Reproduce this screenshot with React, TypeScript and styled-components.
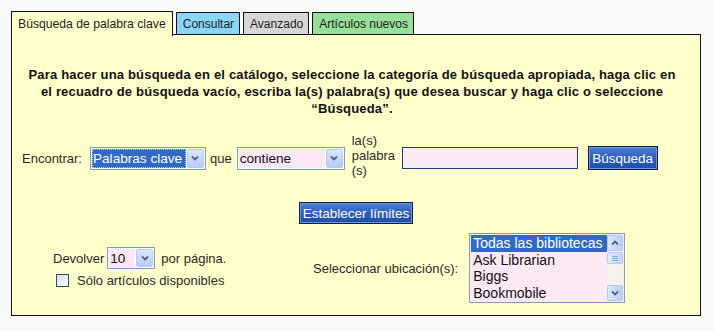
import React from "react";
import styled, { createGlobalStyle } from "styled-components";

const Global = createGlobalStyle`
  html, body { margin: 0; padding: 0; background: #f9fbf8; }
  body { font-family: "Liberation Sans", Arial, sans-serif; font-size: 13px; color: #2a2a2a; }
`;

const Page = styled.div`
  padding: 11px 13px 0 11px;
  width: 690px;
`;

const TabRow = styled.div`
  display: flex;
  align-items: flex-end;
  gap: 3px;
  height: 24px;
  position: relative;
  z-index: 2;
`;

const Tab = styled.div<{ $bg: string; $active?: boolean }>`
  box-sizing: border-box;
  height: ${(p) => (p.$active ? "25px" : "23px")};
  margin-bottom: ${(p) => (p.$active ? "-1px" : "0")};
  padding: 0 ${(p) => (p.$active ? "6px" : "5px")} 0 6px;
  display: flex;
  align-items: center;
  padding-top: ${(p) => (p.$active ? "0" : "1px")};
  background: ${(p) => p.$bg};
  border: 1px solid #111;
  border-bottom: ${(p) => (p.$active ? "none" : "1px solid #111")};
  font-size: ${(p) => (p.$active ? "12.2px" : "12px")};
  color: #1e1e1e;
  white-space: nowrap;
`;

const Panel = styled.div`
  box-sizing: border-box;
  width: 690px;
  height: 282px;
  margin-top: -1px;
  border: 1px solid #111;
  background: #ffffcc;
  position: relative;
  z-index: 1;
  display: flex;
  flex-direction: column;
`;

const Intro = styled.p`
  margin: 31px 0 0;
  text-align: center;
  font-weight: bold;
  font-size: 13px;
  letter-spacing: 0.18px;
  line-height: 17px;
  color: #111;
  padding: 0 21px 0 13px;
`;

const SearchRow = styled.div`
  display: flex;
  align-items: center;
  margin-top: 22px;
  padding-left: 10px;
  height: 38px;
`;

const Label = styled.span<{ $ml?: number }>`
  font-size: 13px;
  color: #2a2a2a;
  margin-left: ${(p) => p.$ml ?? 0}px;
  white-space: nowrap;
`;

const StackLabel = styled.span`
  font-size: 13px;
  line-height: 15px;
  color: #2a2a2a;
  width: 46px;
  margin-left: 7px;
  align-self: flex-start;
  margin-top: -6px;
`;

const SelectBox = styled.div<{ $w: number; $h?: number; $ml?: number }>`
  box-sizing: border-box;
  width: ${(p) => p.$w}px;
  height: ${(p) => p.$h ?? 23}px;
  margin-left: ${(p) => p.$ml ?? 0}px;
  border: 1px solid #7f9db9;
  background: #fff;
  display: flex;
  align-items: stretch;
  padding: 1px;
`;

const SelectValue = styled.div<{ $selected?: boolean }>`
  flex: 1;
  display: flex;
  align-items: center;
  padding-left: 1px;
  font-size: 13.6px;
  background: ${(p) => (p.$selected ? "#316ac5" : "#fbe8f2")};
  color: ${(p) => (p.$selected ? "#fff" : "#111")};
  outline: ${(p) => (p.$selected ? "1px dotted #b9c9ea" : "none")};
  outline-offset: -1px;
  white-space: nowrap;
  overflow: hidden;
`;

const ArrowBtn = styled.div`
  box-sizing: border-box;
  width: 17px;
  flex: none;
  margin-left: 1px;
  border: 1px solid #b5c8f5;
  border-radius: 2px;
  background: linear-gradient(#dce7fd, #b5cbf7);
  display: flex;
  align-items: center;
  justify-content: center;
`;

const Chevron = ({ up }: { up?: boolean }) => (
  <svg width="8" height="6" viewBox="0 0 8 6">
    <path
      d={up ? "M1 4.5 L4 1.5 L7 4.5" : "M1 1.5 L4 4.5 L7 1.5"}
      stroke="#4d6185"
      strokeWidth="1.8"
      fill="none"
    />
  </svg>
);

const TextInput = styled.div`
  box-sizing: border-box;
  width: 176px;
  height: 22px;
  margin-left: 4px;
  border: 1px solid #1c3f74;
  background: #fbe9f3;
`;

const BlueButton = styled.button<{ $w: number; $h: number; $ml?: number }>`
  box-sizing: border-box;
  width: ${(p) => p.$w}px;
  height: ${(p) => p.$h}px;
  margin-left: ${(p) => p.$ml ?? 0}px;
  border: 1px solid #0b1f4a;
  box-shadow: inset 0 0 0 1px #6f95d8;
  background: linear-gradient(#4a7fd6, #2a5cb8 55%, #1f4ea6);
  color: #fff;
  font-family: "Liberation Sans", Arial, sans-serif;
  font-size: 13.5px;
  padding: 0;
  cursor: pointer;
`;

const Center = styled.div`
  display: flex;
  justify-content: center;
  margin-top: 25px;
`;

const Bottom = styled.div`
  display: grid;
  grid-template-columns: 260px 1fr;
  margin-top: 9px;
`;

const LeftCol = styled.div`
  padding-left: 41px;
  padding-top: 14px;
  display: flex;
  flex-direction: column;
  gap: 4px;
`;

const InlineRow = styled.div`
  display: flex;
  align-items: center;
`;

const CheckRow = styled.label`
  display: flex;
  align-items: center;
  gap: 8px;
  margin-left: 3px;
  font-size: 13px;
  color: #2a2a2a;
`;

const Check = styled.span`
  box-sizing: border-box;
  width: 13px;
  height: 13px;
  border: 1px solid #1c5180;
  background: linear-gradient(135deg, #dcdcd6, #fff);
`;

const RightCol = styled.div`
  display: flex;
  align-items: center;
  padding-left: 41px;
  gap: 11px;
`;

const ListBox = styled.div`
  box-sizing: border-box;
  width: 156px;
  height: 70px;
  border: 1px solid #7f9db9;
  background: #fbe9f3;
  display: flex;
  padding: 1px;
`;

const Items = styled.div`
  flex: 1;
  overflow: hidden;
`;

const Item = styled.div<{ $selected?: boolean }>`
  height: 16.5px;
  line-height: 16px;
  font-size: 14px;
  padding-left: 2px;
  white-space: nowrap;
  background: ${(p) => (p.$selected ? "#316ac5" : "transparent")};
  color: ${(p) => (p.$selected ? "#fff" : "#111")};
`;

const ScrollBar = styled.div`
  width: 16px;
  flex: none;
  display: flex;
  flex-direction: column;
  background: #f4f3ee;
`;

const ScrollBtn = styled.div`
  box-sizing: border-box;
  height: 16px;
  border: 1px solid #b5c8f5;
  border-radius: 2px;
  background: linear-gradient(90deg, #dce7fd, #b9cdf7);
  display: flex;
  align-items: center;
  justify-content: center;
`;

const Thumb = styled.div`
  box-sizing: border-box;
  height: 12px;
  margin-top: 1px;
  border: 1px solid #b5c8f5;
  border-radius: 2px;
  background: linear-gradient(90deg, #e4ecfd, #c2d4f8);
  display: flex;
  flex-direction: column;
  align-items: center;
  justify-content: center;
  gap: 1px;
`;

const Grip = styled.span`
  width: 6px;
  height: 1px;
  background: #8ba6d8;
`;

const Track = styled.div`
  flex: 1;
`;

export default function App() {
  return (
    <>
      <Global />
      <Page>
        <TabRow>
          <Tab $bg="#ffffcc" $active>Búsqueda de palabra clave</Tab>
          <Tab $bg="#8ad6f8">Consultar</Tab>
          <Tab $bg="#d6d6d6">Avanzado</Tab>
          <Tab $bg="#98df9a">Artículos nuevos</Tab>
        </TabRow>
        <Panel>
          <Intro>
            Para hacer una búsqueda en el catálogo, seleccione la categoría de búsqueda apropiada, haga clic en
            el recuadro de búsqueda vacío, escriba la(s) palabra(s) que desea buscar y haga clic o seleccione
            “Búsqueda”.
          </Intro>
          <SearchRow>
            <Label>Encontrar:</Label>
            <SelectBox $w={116} $ml={8}>
              <SelectValue $selected>Palabras clave</SelectValue>
              <ArrowBtn><Chevron /></ArrowBtn>
            </SelectBox>
            <Label $ml={4}>que</Label>
            <SelectBox $w={108} $ml={5}>
              <SelectValue>contiene</SelectValue>
              <ArrowBtn><Chevron /></ArrowBtn>
            </SelectBox>
            <StackLabel>la(s) palabra (s)</StackLabel>
            <TextInput />
            <BlueButton $w={70} $h={24} $ml={10}>Búsqueda</BlueButton>
          </SearchRow>
          <Center>
            <BlueButton $w={114} $h={22}>Establecer límites</BlueButton>
          </Center>
          <Bottom>
            <LeftCol>
              <InlineRow>
                <Label>Devolver</Label>
                <SelectBox $w={48} $h={22} $ml={3}>
                  <SelectValue>10</SelectValue>
                  <ArrowBtn><Chevron /></ArrowBtn>
                </SelectBox>
                <Label $ml={6}>por página.</Label>
              </InlineRow>
              <CheckRow>
                <Check />
                Sólo artículos disponibles
              </CheckRow>
            </LeftCol>
            <RightCol>
              <Label>Seleccionar ubicación(s):</Label>
              <ListBox>
                <Items>
                  <Item $selected>Todas las bibliotecas</Item>
                  <Item>Ask Librarian</Item>
                  <Item>Biggs</Item>
                  <Item>Bookmobile</Item>
                </Items>
                <ScrollBar>
                  <ScrollBtn><Chevron up /></ScrollBtn>
                  <Thumb><Grip /><Grip /><Grip /></Thumb>
                  <Track />
                  <ScrollBtn><Chevron /></ScrollBtn>
                </ScrollBar>
              </ListBox>
            </RightCol>
          </Bottom>
        </Panel>
      </Page>
    </>
  );
}
